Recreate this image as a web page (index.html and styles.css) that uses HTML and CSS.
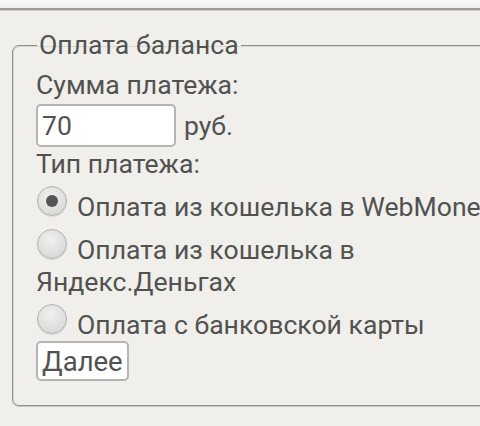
FILE: index.html
```html
<!DOCTYPE html>
<html>
<head>
<meta charset="utf-8">
<link rel="stylesheet" href="styles.css">
</head>
<body>
<div class="topbar"></div>
<form class="form">
  <fieldset class="box">
    <legend class="legend">Оплата баланса</legend>
    <div class="line">Сумма платежа:</div>
    <div class="amount"><input class="field" type="text" value="70"> руб.</div>
    <div class="line">Тип платежа:</div>
    <label class="opt"><input class="radio" type="radio" name="t" checked>Оплата из кошелька в WebMoney</label>
    <label class="opt"><input class="radio" type="radio" name="t">Оплата из кошелька в Яндекс.Деньгах</label>
    <label class="opt"><input class="radio" type="radio" name="t">Оплата с банковской карты</label>
    <div class="actions"><button class="btn" type="button">Далее</button></div>
  </fieldset>
</form>
</body>
</html>
```
FILE: styles.css
```css
html, body {
  margin: 0;
  padding: 0;
  background: #f0efeb;
  overflow: hidden;
}
body {
  font-family: Roboto, "Liberation Sans", sans-serif;
  font-size: 26.6px;
  color: #525250;
  width: 480px;
  height: 426px;
}
.topbar {
  height: 8px;
  background: linear-gradient(#fafafa, #efefef);
  border-bottom: 2px solid #9c9c98;
  box-shadow: 0 1px 0 #cfcfcb;
}
.form {
  margin: 0;
  padding: 19px 0 0 12px;
}
.box {
  margin: 0;
  width: 480px;
  padding: 8px 0 24px 23px;
  border: 1px solid #8e8e8a;
  border-radius: 7px;
  box-shadow: inset 1px 1px 0 #d6d6d2, 0 1px 0 #c8c8c4;
}
.legend {
  padding: 0 2px;
  margin-left: 1px;
  line-height: 32px;
}
.line {
  line-height: 32px;
}
.amount {
  display: flex;
  align-items: center;
  gap: 8px;
  margin: 3px 0 1px;
  line-height: 32px;
}
.field {
  width: 128px;
  height: 39px;
  box-sizing: content-box;
  padding: 0 4px;
  margin: 0;
  font: inherit;
  color: #525250;
  border: 2px solid #b4b4b0;
  border-radius: 5px;
  background: #fff;
  outline: none;
}
.opt {
  display: block;
  line-height: 32px;
}
.radio {
  appearance: none;
  -webkit-appearance: none;
  width: 30px;
  height: 30px;
  margin: 6px 10px 0 1px;
  border-radius: 50%;
  border: 1px solid #b2b2ae;
  background: radial-gradient(circle at 45% 35%, #f0f0ee 0%, #e0e0de 55%, #cfcfcd 100%);
  box-shadow: 0 1px 1px rgba(0,0,0,0.1);
  vertical-align: 0;
  position: relative;
  box-sizing: border-box;
}
.radio:checked::after {
  content: "";
  position: absolute;
  left: 8px;
  top: 8px;
  width: 12px;
  height: 12px;
  border-radius: 50%;
  background: #555;
}
.actions {
  padding-top: 0;
}
.btn {
  font-family: inherit;
  font-size: 27.5px;
  color: #525250;
  background: #fff;
  border: 2px solid #b4b4b0;
  border-radius: 5px;
  padding: 0 4px;
  height: 40px;
  margin: 0;
  display: block;
}
```
